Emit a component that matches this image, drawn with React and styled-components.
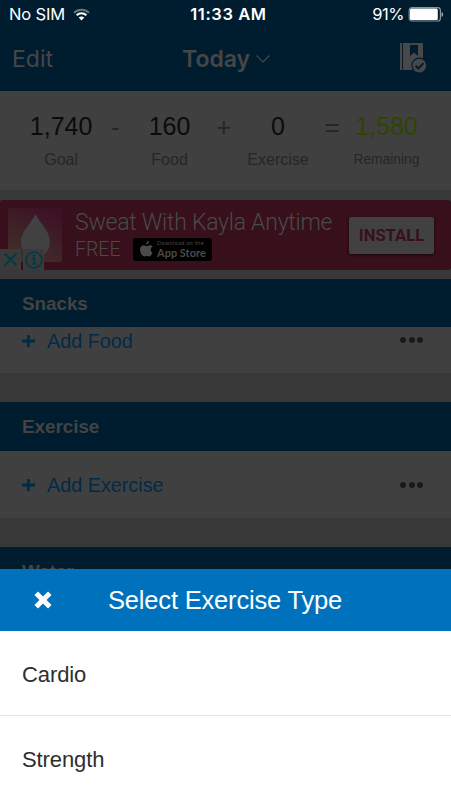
import React from "react";
import styled, { createGlobalStyle } from "styled-components";

const SANS = `"Liberation Sans", Arial, sans-serif`;

const App = () => {
  return (
    <Screen>
      <GlobalStyle />
      <StatusBar>
        <Carrier>
          <StatusText $spacing="-0.15px">No SIM</StatusText>
          <WifiIcon />
        </Carrier>
        <StatusText $weight={600} $spacing="0.6px">
          11:33 AM
        </StatusText>
        <Battery>
          <StatusText $spacing="-0.5px">91%</StatusText>
          <BatteryIcon />
        </Battery>
      </StatusBar>
      <NavBar>
        <EditButton>Edit</EditButton>
        <DayButton>
          Today
          <ChevronIcon />
        </DayButton>
        <DiaryButton>
          <DiaryIcon />
        </DiaryButton>
      </NavBar>

      <Summary>
        <Total value="1,740" label="Goal" />
        <Operator>-</Operator>
        <Total value="160" label="Food" />
        <Operator>+</Operator>
        <Total value="0" label="Exercise" />
        <Operator>=</Operator>
        <Total value="1,580" label="Remaining" remaining />
      </Summary>

      <AdBanner />

      <SectionTitle $height={48}>Snacks</SectionTitle>
      <AddRow label="Add Food" height={46} shift={20} />
      <Gap />
      <SectionTitle>Exercise</SectionTitle>
      <AddRow label="Add Exercise" height={67} />
      <Gap />
      <SectionTitle>Water</SectionTitle>

      <Sheet>
        <SheetHeader>
          <CloseIcon />
          <SheetTitle>Select Exercise Type</SheetTitle>
        </SheetHeader>
        <Option>Cardio</Option>
        <Option>Strength</Option>
      </Sheet>
    </Screen>
  );
};

const Total = ({ value, label, remaining }) => (
  <TotalColumn>
    <TotalValue $remaining={remaining}>{value}</TotalValue>
    <TotalLabel $small={remaining}>{label}</TotalLabel>
  </TotalColumn>
);

const AddRow = ({ label, height, shift = 0 }) => (
  <Row $height={height} $shift={shift}>
    <AddButton>
      <svg width="13" height="13" viewBox="0 0 13 13">
        <path d="M6.5 0v12M0 6h13" stroke="#002b49" strokeWidth="2.8" />
      </svg>
      <span>{label}</span>
    </AddButton>
    <Dots>
      <Dot />
      <Dot />
      <Dot />
    </Dots>
  </Row>
);

const AdBanner = () => (
  <AdSlot>
    <Ad>
      <AdLogo>
        <svg width="54" height="54" viewBox="0 0 54 54">
          <defs>
            <linearGradient id="logo" x1="0.8" y1="0" x2="0.3" y2="1">
              <stop offset="0" stopColor="#3d1024" />
              <stop offset="1" stopColor="#403029" />
            </linearGradient>
          </defs>
          <rect width="54" height="54" rx="3" fill="url(#logo)" />
          <path
            d="M27.5 6C31 14 42 23 42 34c0 9-6.5 15-14.5 15S13 43 13 34C13 23 24 14 27.5 6z"
            fill="#414141"
          />
        </svg>
        <AdChoices>
          <AdBadge>
            <svg width="13" height="13" viewBox="0 0 13 13">
              <path d="M0.5 0.5l12 12M12.5 0.5l-12 12" stroke="#003845" strokeWidth="1.6" />
            </svg>
          </AdBadge>
          <AdBadge>
            <svg width="18" height="18" viewBox="0 0 18 18">
              <circle cx="9" cy="9" r="7.9" fill="none" stroke="#003845" strokeWidth="1.5" />
              <path d="M7 7.5h2.3v5.5M6.8 13h4.8" fill="none" stroke="#003845" strokeWidth="1.5" />
              <circle cx="9" cy="4.8" r="1.2" fill="#003845" />
            </svg>
          </AdBadge>
        </AdChoices>
      </AdLogo>
      <AdCopy>
        <AdTitle>Sweat With Kayla Anytime</AdTitle>
        <AdLine>
          <AdPrice>FREE</AdPrice>
          <StoreBadge>
            <AppleIcon />
            <StoreText>
              <StoreSmall>Download on the</StoreSmall>
              <StoreName>App Store</StoreName>
            </StoreText>
          </StoreBadge>
        </AdLine>
      </AdCopy>
      <InstallButton>INSTALL</InstallButton>
    </Ad>
  </AdSlot>
);

const WifiIcon = () => (
  <svg width="17" height="13" viewBox="0 0 17 13">
    <path d="M1 4.8C5.2 0.6 11.8 0.6 16 4.8" fill="none" stroke="#667782" strokeWidth="2" />
    <path d="M3.6 7.2c2.8-2.6 7-2.6 9.8 0" fill="none" stroke="#fff" strokeWidth="2" />
    <path d="M5.7 9.5c1.6-1.5 4-1.5 5.6 0L8.5 12.5z" fill="#fff" />
  </svg>
);

const BatteryIcon = () => (
  <svg width="36" height="15" viewBox="0 0 36 15">
    <rect x="1.2" y="0.6" width="31.2" height="13.4" rx="2.8" fill="none" stroke="#8797a0" strokeWidth="1.2" />
    <rect x="2" y="1.5" width="27.8" height="11.6" rx="1.5" fill="#fff" />
    <path d="M33.6 5c1.8 0.8 1.8 4.2 0 5z" fill="#c0c8cd" />
  </svg>
);

const ChevronIcon = () => (
  <svg width="14" height="8" viewBox="0 0 14 8">
    <path d="M0.5 0.5L7 7L13.5 0.5" fill="none" stroke="#464646" strokeWidth="1.2" />
  </svg>
);

const DiaryIcon = () => (
  <svg width="27" height="30" viewBox="0 0 27 30">
    <path d="M0 0h2v27H0z" fill="#484848" />
    <path d="M3 0h20v27H3z" fill="#484848" />
    <path d="M10 2h8v11l-4-3.4L10 13z" fill="#001d2f" />
    <circle cx="19.3" cy="22.6" r="8" fill="#001d2f" />
    <circle cx="19.3" cy="22.6" r="6.8" fill="#484848" />
    <path d="M15.6 22.7l2.8 2.8 5-5.4" fill="none" stroke="#001d2f" strokeWidth="2" />
  </svg>
);

const AppleIcon = () => (
  <svg width="13" height="16" viewBox="0 0 13 16">
    <path
      d="M9 0c.1 1.8-1.2 3.4-2.8 3.4C6 1.7 7.4.2 9 0zM12.5 11.5c-.6 1.8-1.8 4-3.2 4-1 0-1.3-.6-2.5-.6s-1.6.6-2.5.6C2.5 15.5 0 11.8 0 8.7c0-2.9 1.8-4.5 3.7-4.5 1.2 0 2.1.8 3 .8.8 0 1.9-.8 3.3-.8 1.1 0 2 .5 2.6 1.4-2.7 1.6-2.2 5-.1 5.9z"
      fill="#4a4a4a"
    />
  </svg>
);

const CloseIcon = () => (
  <svg width="18" height="18" viewBox="0 0 18 18">
    <path d="M2.2 2.2l13.6 13.6M15.8 2.2L2.2 15.8" stroke="#fff" strokeWidth="5" />
  </svg>
);

const GlobalStyle = createGlobalStyle`
  body {
    margin: 0;
    background: #383838;
  }

  * {
    box-sizing: border-box;
  }

  svg {
    display: block;
    flex: none;
  }

  button {
    border: 0;
    padding: 0;
    background: none;
  }
`;

const Screen = styled.div`
  position: relative;
  width: 451px;
  height: 800px;
  overflow: hidden;
  background: #383838;
  font-family: ${SANS};
  white-space: nowrap;
`;

const StatusBar = styled.div`
  display: grid;
  grid-template-columns: 1fr auto 1fr;
  align-items: center;
  height: 29px;
  padding: 0 7px 0 13px;
  background: #001d2f;
`;

const StatusText = styled.span`
  font-family: Inter, sans-serif;
  font-size: 16.5px;
  line-height: 29px;
  font-weight: ${props => props.$weight || 400};
  letter-spacing: ${props => props.$spacing};
  color: #fff;
`;

const Carrier = styled.div`
  display: flex;
  align-items: center;
  gap: 8px;
  margin-left: -4px;
`;

const Battery = styled.div`
  display: flex;
  align-items: center;
  justify-content: flex-end;
  gap: 4px;
`;

const NavBar = styled.div`
  display: grid;
  grid-template-columns: 170px auto 1fr;
  align-items: center;
  height: 62px;
  padding: 0 24px 2px 12px;
  background: #001d2f;
`;

const EditButton = styled.button`
  justify-self: start;
  font-family: Inter, sans-serif;
  font-size: 23px;
  color: #464646;
`;

const DayButton = styled.button`
  display: flex;
  align-items: center;
  gap: 6px;
  font-family: Inter, sans-serif;
  font-size: 23px;
  font-weight: 600;
  color: #464646;
`;

const DiaryButton = styled.button`
  justify-self: end;
  padding-bottom: 3px;
`;

const Summary = styled.div`
  display: flex;
  height: 99px;
  padding: 20px 37.5px 0 34px;
  background: #404040;
`;

const TotalColumn = styled.div`
  display: flex;
  flex: 1 1 0;
  min-width: 0;
  flex-direction: column;
  align-items: center;
`;

const TotalValue = styled.span`
  font-size: 25px;
  line-height: 30px;
  color: ${props => (props.$remaining ? "#2f4400" : "#0b0b0b")};
`;

const TotalLabel = styled.span`
  margin-top: 9px;
  font-size: ${props => (props.$small ? "13.8px" : "16px")};
  line-height: 20px;
  color: #262626;
`;

const Operator = styled.span`
  flex: 1 1 0;
  font-size: 26px;
  line-height: 33px;
  text-align: center;
  color: #262626;
`;

const AdSlot = styled.div`
  height: 89px;
  padding: 10px 0 9px;
`;

const Ad = styled.div`
  display: flex;
  height: 70px;
  padding: 8px 17px 0 8px;
  border-radius: 3px;
  background: #37101b;
  font-family: Roboto, sans-serif;
`;

const AdLogo = styled.div`
  position: relative;
  width: 54px;
`;

const AdChoices = styled.div`
  position: absolute;
  left: -8px;
  top: 41px;
  display: flex;
  gap: 2px;
`;

const AdBadge = styled.span`
  display: flex;
  align-items: center;
  justify-content: center;
  width: 21px;
  height: 21px;
  background: #3a3a3a;
`;

const AdCopy = styled.div`
  flex: 1;
  margin-left: 13px;
  color: #4a4a4a;
`;

const AdTitle = styled.div`
  font-size: 23px;
  font-weight: 300;
  line-height: 29px;
  letter-spacing: -0.25px;
`;

const AdLine = styled.div`
  display: flex;
  align-items: center;
  height: 24px;
`;

const AdPrice = styled.span`
  width: 58px;
  font-size: 19.5px;
  font-weight: 300;
`;

const StoreBadge = styled.div`
  display: flex;
  align-items: center;
  gap: 4px;
  width: 79px;
  height: 23px;
  padding-left: 7px;
  border-radius: 3px;
  background: #000;
`;

const StoreText = styled.div`
  display: flex;
  flex-direction: column;
  font-family: Lato, sans-serif;
`;

const StoreSmall = styled.span`
  font-size: 5.5px;
  line-height: 7px;
  letter-spacing: 0.35px;
`;

const StoreName = styled.span`
  font-size: 11px;
  font-weight: 700;
  line-height: 11px;
`;

const InstallButton = styled.button`
  width: 85px;
  height: 37px;
  margin-top: 9px;
  border-radius: 2px;
  background: #414141;
  box-shadow: 0 1px 3px #170509;
  font-family: Roboto, sans-serif;
  font-size: 16.6px;
  font-weight: 700;
  color: #37101b;
`;

const SectionTitle = styled.div`
  height: ${props => props.$height || 49}px;
  padding-left: 22px;
  background: #001d2f;
  font-size: 18.8px;
  font-weight: 700;
  line-height: 49px;
  color: #434343;
`;

const Row = styled.div`
  display: flex;
  align-items: center;
  justify-content: space-between;
  height: ${props => props.$height}px;
  padding: 0 28px ${props => props.$shift}px 22px;
  background: #404040;
`;

const AddButton = styled.button`
  display: flex;
  align-items: center;
  gap: 12px;
  padding-top: 2px;
  font-family: ${SANS};
  font-size: 19.8px;
  color: #002b49;
`;

const Dots = styled.div`
  display: flex;
  gap: 2.5px;
`;

const Dot = styled.span`
  width: 6px;
  height: 6px;
  border-radius: 50%;
  background: #191919;
`;

const Gap = styled.div`
  height: 29px;
`;

const Sheet = styled.div`
  position: absolute;
  left: 0;
  right: 0;
  bottom: 0;
  height: 231px;
  background: #fff;
`;

const SheetHeader = styled.div`
  display: flex;
  align-items: center;
  height: 62px;
  padding-left: 34px;
  background: #0072bd;
`;

const SheetTitle = styled.h2`
  margin: 0 0 0 56px;
  font-size: 25.5px;
  font-weight: 400;
  letter-spacing: -0.18px;
  color: #fff;
`;

const Option = styled.div`
  height: 85px;
  padding: 2px 22px 0;
  border-bottom: 1px solid #e4e4e4;
  font-size: 22px;
  line-height: 83px;
  letter-spacing: -0.1px;
  color: #2e2e2e;

  &:last-child {
    border-bottom: 0;
  }
`;

export default App;
